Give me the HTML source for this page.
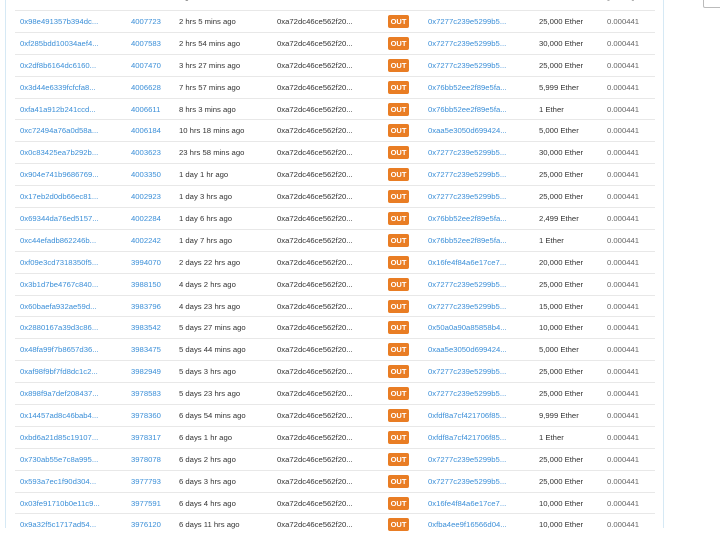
<!DOCTYPE html>
<html><head><meta charset="utf-8"><style>
*{margin:0;padding:0;box-sizing:border-box}
body{width:720px;height:528px;overflow:hidden;background:#fff;font-family:"Liberation Sans",Arial,sans-serif;font-size:7.7px;color:#333;position:relative}
.lb{position:absolute;left:5px;top:0;width:1px;height:528px;background:#d6e9f5}
.rb{position:absolute;left:663px;top:0;width:1px;height:528px;background:#d6e9f5}
.box{position:absolute;left:703px;top:-4px;width:30px;height:12px;border:1px solid #bbb;border-radius:2px}
.t{position:absolute;left:15px;top:0;width:640px}
.r{position:relative;height:21.9px;border-top:1px solid #e8e8e8;line-height:21px;white-space:nowrap}
.h{height:10px;border:none;color:#333;font-weight:bold}
.h span{top:-8px!important;line-height:10px}
.r span{position:absolute;top:0}
.a{color:#3b8fd8}
.c1{left:5px}.c2{left:116px}.c3{left:164px}.c4{left:262px}.c6{left:413px}.c7{left:524px}.c8{left:592px;color:#666}
.o{left:373px;top:4px!important;width:21px;height:13px;line-height:13px;background:#e97d24;color:#fff;font-weight:bold;text-align:center;border-radius:2px;font-size:7.5px}
</style></head><body>
<div class="lb"></div><div class="rb"></div><div class="box"></div>
<div class="t">
<div class="r h"><span class="c1">TxHash</span><span class="c2">Block</span><span class="c3">Age</span><span class="c4">From</span><span class="c6">To</span><span class="c7">Value</span><span class="c8">[TxFee]</span></div>
<div class="r"><span class="c1 a">0x98e491357b394dc...</span><span class="c2 a">4007723</span><span class="c3">2 hrs 5 mins ago</span><span class="c4">0xa72dc46ce562f20...</span><span class="o">OUT</span><span class="c6 a">0x7277c239e5299b5...</span><span class="c7">25,000 Ether</span><span class="c8">0.000441</span></div>
<div class="r"><span class="c1 a">0xf285bdd10034aef4...</span><span class="c2 a">4007583</span><span class="c3">2 hrs 54 mins ago</span><span class="c4">0xa72dc46ce562f20...</span><span class="o">OUT</span><span class="c6 a">0x7277c239e5299b5...</span><span class="c7">30,000 Ether</span><span class="c8">0.000441</span></div>
<div class="r"><span class="c1 a">0x2df8b6164dc6160...</span><span class="c2 a">4007470</span><span class="c3">3 hrs 27 mins ago</span><span class="c4">0xa72dc46ce562f20...</span><span class="o">OUT</span><span class="c6 a">0x7277c239e5299b5...</span><span class="c7">25,000 Ether</span><span class="c8">0.000441</span></div>
<div class="r"><span class="c1 a">0x3d44e6339fcfcfa8...</span><span class="c2 a">4006628</span><span class="c3">7 hrs 57 mins ago</span><span class="c4">0xa72dc46ce562f20...</span><span class="o">OUT</span><span class="c6 a">0x76bb52ee2f89e5fa...</span><span class="c7">5,999 Ether</span><span class="c8">0.000441</span></div>
<div class="r"><span class="c1 a">0xfa41a912b241ccd...</span><span class="c2 a">4006611</span><span class="c3">8 hrs 3 mins ago</span><span class="c4">0xa72dc46ce562f20...</span><span class="o">OUT</span><span class="c6 a">0x76bb52ee2f89e5fa...</span><span class="c7">1 Ether</span><span class="c8">0.000441</span></div>
<div class="r"><span class="c1 a">0xc72494a76a0d58a...</span><span class="c2 a">4006184</span><span class="c3">10 hrs 18 mins ago</span><span class="c4">0xa72dc46ce562f20...</span><span class="o">OUT</span><span class="c6 a">0xaa5e3050d699424...</span><span class="c7">5,000 Ether</span><span class="c8">0.000441</span></div>
<div class="r"><span class="c1 a">0x0c83425ea7b292b...</span><span class="c2 a">4003623</span><span class="c3">23 hrs 58 mins ago</span><span class="c4">0xa72dc46ce562f20...</span><span class="o">OUT</span><span class="c6 a">0x7277c239e5299b5...</span><span class="c7">30,000 Ether</span><span class="c8">0.000441</span></div>
<div class="r"><span class="c1 a">0x904e741b9686769...</span><span class="c2 a">4003350</span><span class="c3">1 day 1 hr ago</span><span class="c4">0xa72dc46ce562f20...</span><span class="o">OUT</span><span class="c6 a">0x7277c239e5299b5...</span><span class="c7">25,000 Ether</span><span class="c8">0.000441</span></div>
<div class="r"><span class="c1 a">0x17eb2d0db66ec81...</span><span class="c2 a">4002923</span><span class="c3">1 day 3 hrs ago</span><span class="c4">0xa72dc46ce562f20...</span><span class="o">OUT</span><span class="c6 a">0x7277c239e5299b5...</span><span class="c7">25,000 Ether</span><span class="c8">0.000441</span></div>
<div class="r"><span class="c1 a">0x69344da76ed5157...</span><span class="c2 a">4002284</span><span class="c3">1 day 6 hrs ago</span><span class="c4">0xa72dc46ce562f20...</span><span class="o">OUT</span><span class="c6 a">0x76bb52ee2f89e5fa...</span><span class="c7">2,499 Ether</span><span class="c8">0.000441</span></div>
<div class="r"><span class="c1 a">0xc44efadb862246b...</span><span class="c2 a">4002242</span><span class="c3">1 day 7 hrs ago</span><span class="c4">0xa72dc46ce562f20...</span><span class="o">OUT</span><span class="c6 a">0x76bb52ee2f89e5fa...</span><span class="c7">1 Ether</span><span class="c8">0.000441</span></div>
<div class="r"><span class="c1 a">0xf09e3cd7318350f5...</span><span class="c2 a">3994070</span><span class="c3">2 days 22 hrs ago</span><span class="c4">0xa72dc46ce562f20...</span><span class="o">OUT</span><span class="c6 a">0x16fe4f84a6e17ce7...</span><span class="c7">20,000 Ether</span><span class="c8">0.000441</span></div>
<div class="r"><span class="c1 a">0x3b1d7be4767c840...</span><span class="c2 a">3988150</span><span class="c3">4 days 2 hrs ago</span><span class="c4">0xa72dc46ce562f20...</span><span class="o">OUT</span><span class="c6 a">0x7277c239e5299b5...</span><span class="c7">25,000 Ether</span><span class="c8">0.000441</span></div>
<div class="r"><span class="c1 a">0x60baefa932ae59d...</span><span class="c2 a">3983796</span><span class="c3">4 days 23 hrs ago</span><span class="c4">0xa72dc46ce562f20...</span><span class="o">OUT</span><span class="c6 a">0x7277c239e5299b5...</span><span class="c7">15,000 Ether</span><span class="c8">0.000441</span></div>
<div class="r"><span class="c1 a">0x2880167a39d3c86...</span><span class="c2 a">3983542</span><span class="c3">5 days 27 mins ago</span><span class="c4">0xa72dc46ce562f20...</span><span class="o">OUT</span><span class="c6 a">0x50a0a90a85858b4...</span><span class="c7">10,000 Ether</span><span class="c8">0.000441</span></div>
<div class="r"><span class="c1 a">0x48fa99f7b8657d36...</span><span class="c2 a">3983475</span><span class="c3">5 days 44 mins ago</span><span class="c4">0xa72dc46ce562f20...</span><span class="o">OUT</span><span class="c6 a">0xaa5e3050d699424...</span><span class="c7">5,000 Ether</span><span class="c8">0.000441</span></div>
<div class="r"><span class="c1 a">0xaf98f9bf7fd8dc1c2...</span><span class="c2 a">3982949</span><span class="c3">5 days 3 hrs ago</span><span class="c4">0xa72dc46ce562f20...</span><span class="o">OUT</span><span class="c6 a">0x7277c239e5299b5...</span><span class="c7">25,000 Ether</span><span class="c8">0.000441</span></div>
<div class="r"><span class="c1 a">0x898f9a7def208437...</span><span class="c2 a">3978583</span><span class="c3">5 days 23 hrs ago</span><span class="c4">0xa72dc46ce562f20...</span><span class="o">OUT</span><span class="c6 a">0x7277c239e5299b5...</span><span class="c7">25,000 Ether</span><span class="c8">0.000441</span></div>
<div class="r"><span class="c1 a">0x14457ad8c46bab4...</span><span class="c2 a">3978360</span><span class="c3">6 days 54 mins ago</span><span class="c4">0xa72dc46ce562f20...</span><span class="o">OUT</span><span class="c6 a">0xfdf8a7cf421706f85...</span><span class="c7">9,999 Ether</span><span class="c8">0.000441</span></div>
<div class="r"><span class="c1 a">0xbd6a21d85c19107...</span><span class="c2 a">3978317</span><span class="c3">6 days 1 hr ago</span><span class="c4">0xa72dc46ce562f20...</span><span class="o">OUT</span><span class="c6 a">0xfdf8a7cf421706f85...</span><span class="c7">1 Ether</span><span class="c8">0.000441</span></div>
<div class="r"><span class="c1 a">0x730ab55e7c8a995...</span><span class="c2 a">3978078</span><span class="c3">6 days 2 hrs ago</span><span class="c4">0xa72dc46ce562f20...</span><span class="o">OUT</span><span class="c6 a">0x7277c239e5299b5...</span><span class="c7">25,000 Ether</span><span class="c8">0.000441</span></div>
<div class="r"><span class="c1 a">0x593a7ec1f90d304...</span><span class="c2 a">3977793</span><span class="c3">6 days 3 hrs ago</span><span class="c4">0xa72dc46ce562f20...</span><span class="o">OUT</span><span class="c6 a">0x7277c239e5299b5...</span><span class="c7">25,000 Ether</span><span class="c8">0.000441</span></div>
<div class="r"><span class="c1 a">0x03fe91710b0e11c9...</span><span class="c2 a">3977591</span><span class="c3">6 days 4 hrs ago</span><span class="c4">0xa72dc46ce562f20...</span><span class="o">OUT</span><span class="c6 a">0x16fe4f84a6e17ce7...</span><span class="c7">10,000 Ether</span><span class="c8">0.000441</span></div>
<div class="r"><span class="c1 a">0x9a32f5c1717ad54...</span><span class="c2 a">3976120</span><span class="c3">6 days 11 hrs ago</span><span class="c4">0xa72dc46ce562f20...</span><span class="o">OUT</span><span class="c6 a">0xfba4ee9f16566d04...</span><span class="c7">10,000 Ether</span><span class="c8">0.000441</span></div>
</div>
</body></html>
